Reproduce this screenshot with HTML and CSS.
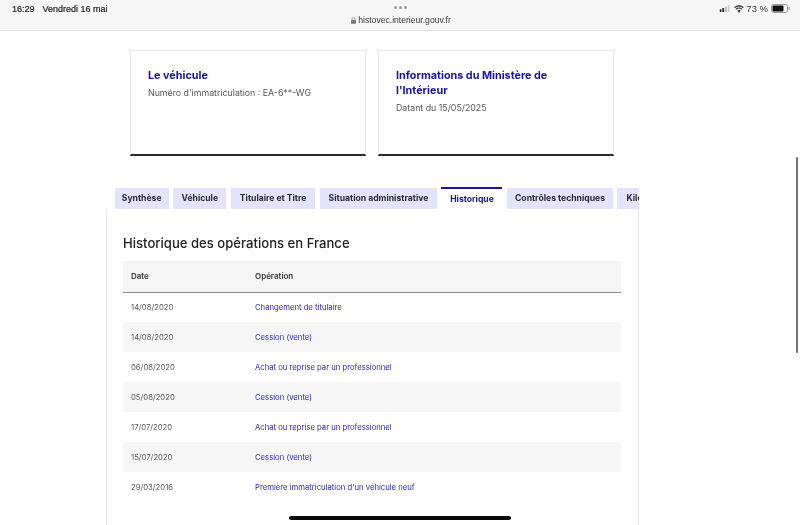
FILE: index.html
```html
<!DOCTYPE html>
<html lang="fr">
<head>
<meta charset="utf-8">
<title>HistoVec</title>
<link rel="stylesheet" href="styles.css">
</head>
<body>
<header class="bar">
  <div class="bar-left"><span>16:29</span><span>Vendredi 16 mai</span></div>
  <div class="bar-center">
    <div class="dots"><i></i><i></i><i></i></div>
    <div class="url">
      <svg class="lock" width="5" height="7" viewBox="0 0 6 8"><path d="M1.2 3.5V2.2a1.8 1.8 0 0 1 3.6 0v1.3" fill="none" stroke="#777" stroke-width=".8"/><rect x="0" y="3.4" width="6" height="4.6" rx=".7" fill="#777"/></svg>
      <span>histovec.interieur.gouv.fr</span>
    </div>
  </div>
  <div class="bar-right">
    <svg width="12" height="7" viewBox="0 0 12 8"><rect x="0" y="5" width="2" height="3" fill="#222"/><rect x="3" y="3.5" width="2" height="4.5" fill="#222"/><rect x="6" y="2" width="2" height="6" fill="#bbb"/><rect x="9" y="0" width="2" height="8" fill="#ccc"/></svg>
    <svg width="10" height="8" viewBox="0 0 11 8"><path d="M.6 2.6a7 7 0 0 1 9.8 0M2.2 4.3a4.8 4.8 0 0 1 6.6 0" fill="none" stroke="#222" stroke-width="1.2"/><path d="M5.5 8 3.7 6a2.6 2.6 0 0 1 3.6 0z" fill="#222"/></svg>
    <span class="pct">73 %</span>
    <svg width="19" height="9" viewBox="0 0 19 9"><rect x=".5" y=".5" width="16" height="8" rx="2" fill="none" stroke="#999"/><rect x="1.5" y="1.5" width="11" height="6" rx="1" fill="#111"/><rect x="17.4" y="3" width="1.2" height="3" rx=".5" fill="#999"/></svg>
  </div>
</header>
<main class="page">
  <section class="cards">
    <article class="card">
      <h2>Le véhicule</h2>
      <p>Numéro d'immatriculation : EA-6**-WG</p>
    </article>
    <article class="card">
      <h2>Informations du Ministère de l'Intérieur</h2>
      <p>Datant du 15/05/2025</p>
    </article>
  </section>
  <nav class="tabs">
    <a class="tab">Synthèse</a>
    <a class="tab">Véhicule</a>
    <a class="tab">Titulaire et Titre</a>
    <a class="tab">Situation administrative</a>
    <a class="tab active">Historique</a>
    <a class="tab">Contrôles techniques</a>
    <a class="tab last">Kilométrage</a>
  </nav>
  <section class="panel">
    <h3>Historique des opérations en France</h3>
    <table>
      <thead><tr><th>Date</th><th>Opération</th></tr></thead>
      <tbody>
        <tr><td>14/08/2020</td><td><a>Changement de titulaire</a></td></tr>
        <tr><td>14/08/2020</td><td><a>Cession (vente)</a></td></tr>
        <tr><td>06/08/2020</td><td><a>Achat ou reprise par un professionnel</a></td></tr>
        <tr><td>05/08/2020</td><td><a>Cession (vente)</a></td></tr>
        <tr><td>17/07/2020</td><td><a>Achat ou reprise par un professionnel</a></td></tr>
        <tr><td>15/07/2020</td><td><a>Cession (vente)</a></td></tr>
        <tr><td>29/03/2016</td><td><a>Première immatriculation d'un véhicule neuf</a></td></tr>
      </tbody>
    </table>
  </section>
</main>
<div class="scrollbar"></div>
<div class="home"></div>
</body>
</html>
```
FILE: styles.css
```css
* { box-sizing: border-box; }
html, body { margin: 0; height: 525px; overflow: hidden; background: #fff; }
body { font-family: "Inter", "Liberation Sans", sans-serif; color: #222; position: relative; }
.bar {
  height: 31px; background: #f6f6f6; border-bottom: 1px solid #dedede;
  display: grid; grid-template-columns: 1fr auto 1fr; padding: 3px 10px 0 12px;
  font-family: "Liberation Sans", sans-serif; filter: blur(.3px);
}
.bar-left { display: flex; gap: 8px; font-size: 9px; color: #222; height: 11px; align-items: center; -webkit-text-stroke: .2px #222; }
.bar-center { display: flex; flex-direction: column; align-items: center; padding-top: 3px; }
.dots { display: flex; gap: 2px; }
.dots i { width: 3px; height: 3px; border-radius: 50%; background: #999; }
.url { display: flex; align-items: center; gap: 2px; font-size: 8.6px; color: #333; margin-top: 6px; }
.bar-right { display: flex; justify-content: flex-end; align-items: center; gap: 3px; height: 11px; }
.pct { font-size: 9.5px; color: #333; margin-left: -1px; }
.page { padding-top: 19px; filter: blur(.3px); }
.cards { display: flex; gap: 12px; padding-left: 130px; }
.card {
  width: 236px; height: 106px; padding: 17px 17px 0;
  border: 1px solid #e6e6e6; border-bottom: 2px solid #2a2a2a;
}
.card h2 { margin: 0 0 2px; font-size: 10.8px; line-height: 15px; font-weight: 700; color: #1414a4; }
.card p { margin: 0; font-size: 8.8px; line-height: 15px; color: #555; }
.tabs {
  display: grid; grid-template-columns: 54.3px 53px 84.7px 117px 61px 106px 60px; column-gap: 4.5px;
  margin: 31px 0 0 114.5px; width: 524px; overflow: hidden; height: 22px; padding-top: 1px;
}
.tab {
  height: 21px; background: #e3e3fd; color: #2a2a2a; text-align: center; white-space: nowrap; overflow: hidden;
  font-size: 8.6px; line-height: 21px; font-weight: 700;
}
.tab.last { text-align: left; padding-left: 9px; }
.tab.active { background: #fff; color: #1414a4; border-top: 2px solid #1414a4; margin-top: -1px; height: 22px; line-height: 20px; }
.panel { margin-left: 106px; width: 533px; height: 320px; border: 1px solid #e6e6e6; border-top: 0; padding: 26px 16px 0; }
.panel h3 { margin: 0 0 9px; font-size: 13.1px; line-height: 17px; font-weight: 500; color: #222; }
table { width: 498px; border-collapse: collapse; font-size: 7.7px; table-layout: fixed; }
th { height: 31px; background: #f5f5f5; border-bottom: 1px solid #888; text-align: left; font-size: 8px; font-weight: 600; color: #333; padding: 0 8px; }
th:first-child, td:first-child { width: 124px; }
td { height: 30px; padding: 0 8px; color: #555; }
tbody tr:nth-child(even) td { background: #f6f6f6; }
td a { color: #2a2ab0; }
.scrollbar { position: absolute; left: 796px; top: 157px; width: 2px; height: 196px; border-radius: 1px; background: #777; }
.home { position: absolute; left: 289px; top: 516px; width: 222px; height: 4px; border-radius: 2px; background: #0a0a0a; }
```
